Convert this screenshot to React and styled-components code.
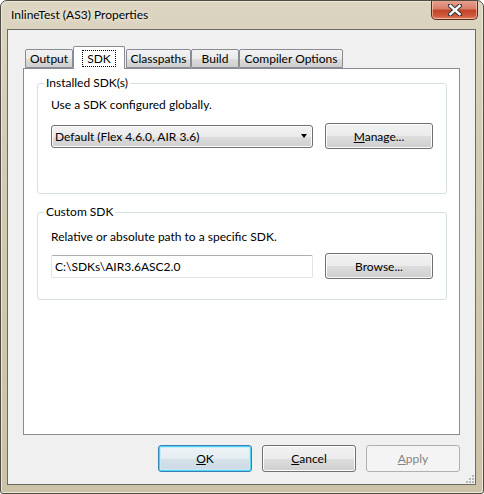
import styled, { createGlobalStyle } from "styled-components";

const GlobalStyle = createGlobalStyle`
  html, body {
    margin: 0;
    padding: 0;
    background: #ffffff;
  }
  * {
    box-sizing: border-box;
  }
`;

const FONT = `"Segoe UI", Lato, "Liberation Sans", sans-serif`;

const Ventana = styled.div`
  width: 484px;
  height: 494px;
  border: 1px solid #4f4c44;
  border-radius: 7px 7px 3px 3px;
  background: linear-gradient(180deg, #dcd5c1 0%, #d3cbb3 30%, #cbc2a8 100%);
  display: flex;
  flex-direction: column;
  font-family: ${FONT};
  font-size: 12px;
  color: #000;
  overflow: hidden;
  box-shadow: inset 1px 1px 0 #ece7d9, inset -1px -1px 0 #ece7d9;
`;

const BarraTitulo = styled.div`
  height: 28px;
  display: flex;
  align-items: flex-start;
  justify-content: space-between;
  padding-left: 10px;
  padding-right: 5px;
`;

const Titulo = styled.span`
  line-height: 28px;
  font-size: 12px;
  text-shadow: 0 0 6px #f4f0e4, 0 0 3px #f4f0e4;
`;

const BotonCerrar = styled.div`
  width: 47px;
  height: 20px;
  margin-top: -1px;
  border: 1px solid #5a2a20;
  border-top: none;
  border-radius: 0 0 5px 5px;
  background: linear-gradient(180deg, #e8a593 0%, #d7806a 45%, #c4442a 55%, #cf5a3c 85%, #e48e6d 100%);
  box-shadow: inset 0 0 0 1px rgba(255, 220, 200, 0.55);
  display: flex;
  align-items: center;
  justify-content: center;
`;

const Cuerpo = styled.div`
  flex: 1;
  display: flex;
  padding: 0 7px 8px 6px;
`;

const Cliente = styled.div`
  position: relative;
  flex: 1;
  border: 1px solid #6d6a60;
  background: #f0f0f0;
  display: flex;
  flex-direction: column;
  padding: 16px 15px 12px 15px;
`;

const FilaPestanas = styled.div`
  height: 22px;
  display: flex;
  align-items: flex-end;
  padding-left: 2px;
`;

const Pestana = styled.div`
  position: relative;
  width: ${(props) => props.ancho}px;
  margin-left: ${(props) => props.margen || 0}px;
  height: ${(props) => (props.activa ? 23 : 19)}px;
  margin-bottom: ${(props) => (props.activa ? -1 : 0)}px;
  z-index: ${(props) => (props.activa ? 2 : 1)};
  border: 1px solid #898c95;
  border-bottom: ${(props) => (props.activa ? "none" : "1px solid #898c95")};
  border-radius: 2px 2px 0 0;
  background: ${(props) =>
    props.activa ? "#ffffff" : "linear-gradient(180deg, #f2f2f2 0%, #ebebeb 50%, #dddddd 51%, #cfcfcf 100%)"};
  display: flex;
  justify-content: center;
  align-items: ${(props) => (props.activa ? "flex-start" : "center")};
  padding-top: ${(props) => (props.activa ? 3 : 0)}px;
  line-height: 15px;
  white-space: nowrap;
`;

const Foco = styled.span`
  border: 1px dotted #000;
  padding: 0 4px;
  line-height: 15px;
`;

const Panel = styled.div`
  flex: 1;
  background: #ffffff;
  border: 1px solid #898c95;
  padding: 6px 12px 0 13px;
  display: flex;
  flex-direction: column;
  gap: 10px;
`;

const Grupo = styled.fieldset`
  margin: 0;
  padding: 0;
  border: 1px solid #d5dfe5;
  border-radius: 3px;
  min-width: 0;
`;

const Leyenda = styled.legend`
  margin-left: 6px;
  padding: 0 2px;
  line-height: 16px;
`;

const ContenidoGrupo = styled.div`
  padding: ${(props) => props.arriba}px 13px ${(props) => props.abajo}px 13px;
  display: flex;
  flex-direction: column;
`;

const Descripcion = styled.div`
  line-height: 16px;
  margin-bottom: ${(props) => props.separacion}px;
`;

const FilaControl = styled.div`
  display: flex;
  align-items: center;
  gap: 12px;
  height: 26px;
`;

const Combo = styled.div`
  width: 262px;
  height: 23px;
  border: 1px solid #707070;
  border-radius: 3px;
  background: linear-gradient(180deg, #f2f2f2 0%, #ebebeb 50%, #dddddd 51%, #cfcfcf 100%);
  box-shadow: inset 0 0 0 1px #fcfcfc;
  display: flex;
  align-items: center;
  justify-content: space-between;
  padding: 0 5px 0 3px;
`;

const Flecha = styled.span`
  width: 0;
  height: 0;
  border-left: 3.5px solid transparent;
  border-right: 3.5px solid transparent;
  border-top: 4px solid #000;
`;

const CampoTexto = styled.div`
  width: 262px;
  height: 23px;
  border: 1px solid #e2e3ea;
  border-top-color: #abadb3;
  border-radius: 2px;
  background: #ffffff;
  display: flex;
  align-items: center;
  padding-left: 3px;
`;

const Boton = styled.div`
  width: ${(props) => props.ancho || 108}px;
  height: ${(props) => props.alto || 26}px;
  border: 1px solid ${(props) => (props.defecto ? "#3c7fb1" : props.deshabilitado ? "#adb2b5" : "#707070")};
  border-radius: 3px;
  background: ${(props) =>
    props.deshabilitado
      ? "#f4f4f4"
      : props.defecto
      ? "linear-gradient(180deg, #eef4f8 0%, #e5edf2 50%, #d6e2ea 51%, #cbd9e3 100%)"
      : "linear-gradient(180deg, #f2f2f2 0%, #ebebeb 50%, #dddddd 51%, #cfcfcf 100%)"};
  box-shadow: ${(props) =>
    props.defecto ? "inset 0 0 0 1px #4fd3f7, inset 0 0 0 2px #c7eaf8" : props.deshabilitado ? "none" : "inset 0 0 0 1px #fcfcfc"};
  color: ${(props) => (props.deshabilitado ? "#838383" : "#000")};
  display: flex;
  align-items: center;
  justify-content: center;
`;

const FilaBotones = styled.div`
  display: flex;
  justify-content: flex-end;
  gap: 10px;
  margin-top: 10px;
`;

const Agarre = styled.svg`
  position: absolute;
  right: 1px;
  bottom: 1px;
`;

const pestanas = [
  { nombre: "Output", ancho: 48 },
  { nombre: "SDK", ancho: 52, activa: true },
  { nombre: "Classpaths", ancho: 65, margen: 1 },
  { nombre: "Build", ancho: 48 },
  { nombre: "Compiler Options", ancho: 104 },
];

const App = () => {
  return (
    <>
      <GlobalStyle />
      <Ventana>
        <BarraTitulo>
          <Titulo>InlineTest (AS3) Properties</Titulo>
          <BotonCerrar>
            <svg width="14" height="12" viewBox="0 0 14 12">
              <path d="M2 1.5 L12 10.5 M12 1.5 L2 10.5" stroke="#3a3a3a" strokeWidth="4.4" strokeLinecap="round" />
              <path d="M2.4 1.9 L11.6 10.1 M11.6 1.9 L2.4 10.1" stroke="#ffffff" strokeWidth="2.4" strokeLinecap="square" />
            </svg>
          </BotonCerrar>
        </BarraTitulo>
        <Cuerpo>
          <Cliente>
            <FilaPestanas>
              {pestanas.map((p) => (
                <Pestana key={p.nombre} ancho={p.ancho} margen={p.margen} activa={p.activa}>
                  {p.activa ? <Foco>{p.nombre}</Foco> : p.nombre}
                </Pestana>
              ))}
            </FilaPestanas>
            <Panel>
              <Grupo>
                <Leyenda>Installed SDK(s)</Leyenda>
                <ContenidoGrupo arriba={6} abajo={44}>
                  <Descripcion separacion={10}>Use a SDK configured globally.</Descripcion>
                  <FilaControl>
                    <Combo>
                      <span>Default (Flex 4.6.0, AIR 3.6)</span>
                      <Flecha />
                    </Combo>
                    <Boton>
                      <span>
                        <u>M</u>anage...
                      </span>
                    </Boton>
                  </FilaControl>
                </ContenidoGrupo>
              </Grupo>
              <Grupo>
                <Leyenda>Custom SDK</Leyenda>
                <ContenidoGrupo arriba={9} abajo={20}>
                  <Descripcion separacion={8}>Relative or absolute path to a specific SDK.</Descripcion>
                  <FilaControl>
                    <CampoTexto>C:\SDKs\AIR3.6ASC2.0</CampoTexto>
                    <Boton>Browse...</Boton>
                  </FilaControl>
                </ContenidoGrupo>
              </Grupo>
            </Panel>
            <FilaBotones>
              <Boton ancho={94} alto={27} defecto>
                <span>
                  <u>O</u>K
                </span>
              </Boton>
              <Boton ancho={94} alto={27}>
                <span>
                  <u>C</u>ancel
                </span>
              </Boton>
              <Boton ancho={94} alto={27} deshabilitado>
                <span>
                  <u>A</u>pply
                </span>
              </Boton>
            </FilaBotones>
            <Agarre width="8" height="8" viewBox="0 0 8 8">
              {[
                [6, 0],
                [6, 3],
                [3, 3],
                [6, 6],
                [3, 6],
                [0, 6],
              ].map(([x, y]) => (
                <rect key={`${x}-${y}`} x={x} y={y} width="2" height="2" fill="#b8b8b8" />
              ))}
            </Agarre>
          </Cliente>
        </Cuerpo>
      </Ventana>
    </>
  );
};

export default App;
